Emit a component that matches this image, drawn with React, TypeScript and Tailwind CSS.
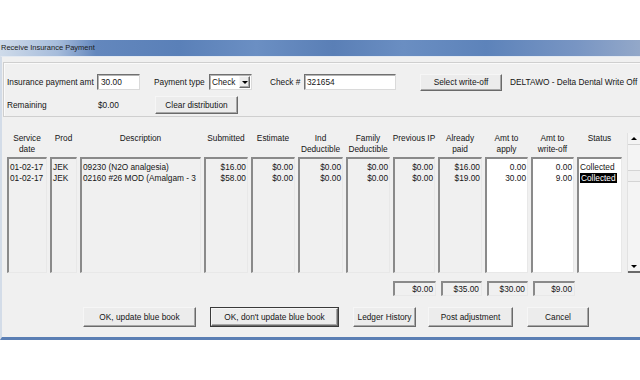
import React from "react";

type Col = {
  head: string[];
  cells: string[];
  right?: boolean;
  white?: boolean;
  status?: boolean;
};

const columns: Col[] = [
  { head: ["Service", "date"], cells: ["01-02-17", "01-02-17"] },
  { head: ["Prod"], cells: ["JEK", "JEK"] },
  {
    head: ["Description"],
    cells: ["09230 (N2O analgesia)", "02160 #26 MOD (Amalgam - 3"],
  },
  { head: ["Submitted"], cells: ["$16.00", "$58.00"], right: true },
  { head: ["Estimate"], cells: ["$0.00", "$0.00"], right: true },
  { head: ["Ind", "Deductible"], cells: ["$0.00", "$0.00"], right: true },
  { head: ["Family", "Deductible"], cells: ["$0.00", "$0.00"], right: true },
  { head: ["Previous IP"], cells: ["$0.00", "$0.00"], right: true },
  { head: ["Already", "paid"], cells: ["$16.00", "$19.00"], right: true },
  { head: ["Amt to", "apply"], cells: ["0.00", "30.00"], right: true, white: true },
  { head: ["Amt to", "write-off"], cells: ["0.00", "9.00"], right: true, white: true },
  { head: ["Status"], cells: ["Collected", "Collected"], white: true, status: true },
];

const sunken =
  "border-t-2 border-l-2 border-r border-b border-t-[#8a8a8a] border-l-[#8a8a8a] border-r-[#e8e8e8] border-b-[#e8e8e8]";
const field =
  "border border-t-[#707070] border-l-[#707070] border-r-[#dadada] border-b-[#dadada] shadow-[inset_1px_1px_0_#b4b4b4] bg-white";
const raised =
  "border border-t-[#f6f6f6] border-l-[#f6f6f6] border-r-[#6a6a6a] border-b-[#6a6a6a] shadow-[inset_-1px_-1px_0_#a8a8a8] bg-[#ececec]";

function Btn({ label, className = "" }: { label: string; className?: string }) {
  return (
    <div className={`flex items-center justify-center whitespace-nowrap ${raised} ${className}`}>
      {label}
    </div>
  );
}

export default function App() {
  return (
    <div className="w-[640px] h-[380px] bg-white overflow-hidden font-['Liberation_Sans',Arial,sans-serif] text-[8.3px] text-[#151515]">
      <div className="h-[40px]" />

      {/* ── Dialog window ── */}
      <div className="h-[300px] flex flex-col">
        {/* Title bar */}
        <div className="h-[16px] flex items-center pl-[1px] text-[7.5px] text-[#1a1a1a] bg-[linear-gradient(90deg,#cfdbea_0%,#a6bcdb_9%,#6387bd_15%,#5a80b8_28%,#6b8fc3_40%,#5a7fb6_52%,#6a8ec2_63%,#5d83ba_76%,#7895c3_90%,#93a8c9_100%)]">
          Receive Insurance Payment
        </div>

        {/* Body */}
        <div className="flex-1 flex flex-col bg-[#f0f0f0] border-l-2 border-l-[#d3dce8] border-t border-t-[#e3e9f1] border-b-[3px] border-b-[#5b7fb4]">
          {/* Group box */}
          <div className="mt-[5px] ml-[1px] h-[55px] border border-r-0 border-[#cfcfcf] shadow-[inset_1px_1px_0_#fafafa] flex flex-col pt-[11px] pl-[3px]">
            <div className="h-[16px] flex items-center">
              <div className="w-[90px]">Insurance payment amt</div>
              <div className={`w-[43px] h-[16px] pl-[3px] flex items-center ${field}`}>30.00</div>
              <div className="ml-[14px] w-[55px]">Payment type</div>
              <div className={`w-[43px] h-[16px] flex items-center ${field}`}>
                <span className="flex-1 pl-[2px]">Check</span>
                <div className={`w-[11px] h-[12px] mr-[1px] flex items-center justify-center ${raised}`}>
                  <div className="w-0 h-0 border-x-[3px] border-x-transparent border-t-[3px] border-t-black" />
                </div>
              </div>
              <div className="ml-[18px] w-[34px]">Check #</div>
              <div className={`w-[92px] h-[16px] pl-[2px] flex items-center ${field}`}>321654</div>
              <Btn label="Select write-off" className="ml-[24px] w-[82px] h-[17px]" />
              <div className="ml-[8px] whitespace-nowrap">DELTAWO - Delta Dental Write Off</div>
            </div>
            <div className="mt-[6px] h-[18px] flex items-center">
              <div className="w-[91px]">Remaining</div>
              <div className="w-[57px]">$0.00</div>
              <Btn label="Clear distribution" className="w-[83px] h-[18px]" />
            </div>
          </div>

          {/* Distribution grid */}
          <div className="mt-[15px] ml-[5px] flex">
            <div className="grid grid-cols-[40px_27px_121px_44px_44px_45px_44px_42px_44px_43px_43px_45px] gap-x-[3px]">
              {columns.map((c, i) => (
                <div key={i} className="flex flex-col">
                  <div className="h-[25px] pt-[1px] flex flex-col items-center leading-[11px] whitespace-nowrap">
                    {c.head.map((h) => (
                      <span key={h}>{h}</span>
                    ))}
                  </div>
                  <div
                    className={`h-[116px] pt-[3px] px-[1px] leading-[11px] overflow-hidden whitespace-nowrap ${sunken} ${
                      c.white ? "bg-white" : "bg-[#f0f0f0]"
                    } ${c.right ? "text-right" : "text-left"}`}
                  >
                    {c.cells.map((t, j) =>
                      c.status && j === 1 ? (
                        <div key={j}>
                          <span className="bg-black text-white px-[1px]">{t}</span>
                        </div>
                      ) : (
                        <div key={j}>{t}</div>
                      )
                    )}
                  </div>
                </div>
              ))}
            </div>

            {/* Scrollbar */}
            <div className="ml-[5px] mt-[1px] w-[13px] h-[140px] flex flex-col bg-[#f4f4f4] border-l border-[#e2e2e2]">
              <div className="h-[12px] flex items-center justify-center border-b border-[#d2d2d2]">
                <div className="w-0 h-0 border-x-[3px] border-x-transparent border-b-[3px] border-b-black" />
              </div>
              <div className="h-[25px]" />
              <div className="h-[12px] border-y border-[#d4d4d4] bg-[#f0f0f0]" />
              <div className="flex-1" />
              <div className="h-[11px] flex items-center justify-center border-b-2 border-[#6a6a6a]">
                <div className="w-0 h-0 border-x-[3px] border-x-transparent border-t-[3px] border-t-black" />
              </div>
            </div>
          </div>

          {/* Totals */}
          <div className="mt-[8px] ml-[391px] flex h-[15px]">
            <div className={`w-[43px] pr-[2px] flex items-center justify-end ${sunken}`}>$0.00</div>
            <div className={`ml-[5px] w-[41px] pr-[2px] flex items-center justify-end ${sunken}`}>$35.00</div>
            <div className={`ml-[5px] w-[41px] pr-[2px] flex items-center justify-end ${sunken}`}>$30.00</div>
            <div className={`ml-[5px] w-[42px] pr-[2px] flex items-center justify-end ${sunken}`}>$9.00</div>
          </div>

          {/* Action buttons */}
          <div className="mt-[11px] ml-[81px] flex h-[20px]">
            <Btn label="OK, update blue book" className="w-[113px]" />
            <div className="ml-[14px] w-[129px] border border-[#3a3a3a] flex">
              <Btn label="OK, don't update blue book" className="flex-1" />
            </div>
            <Btn label="Ledger History" className="ml-[14px] w-[63px]" />
            <Btn label="Post adjustment" className="ml-[12px] w-[85px]" />
            <Btn label="Cancel" className="ml-[14px] w-[62px]" />
          </div>
        </div>
      </div>
    </div>
  );
}
